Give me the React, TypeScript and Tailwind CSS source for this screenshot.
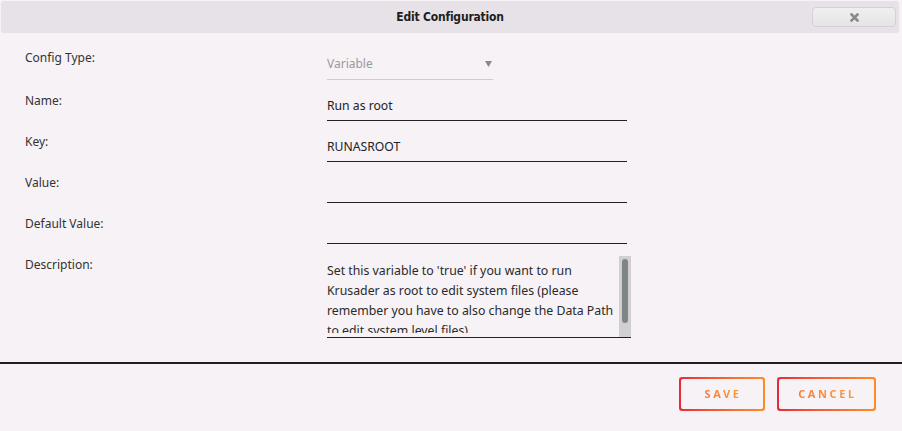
import React from "react";

const font = { fontFamily: '"Noto Sans", "Open Sans", sans-serif' };

function Row({ label, top, children }: { label: string; top?: string; children: React.ReactNode }) {
  return (
    <div className={`flex ${top ?? ""}`}>
      <div className="w-[327px] shrink-0 pl-[25px] text-[12px] leading-[20px] text-[#333]">{label}</div>
      {children}
    </div>
  );
}

function TextField({ value }: { value: string }) {
  return (
    <div className="mt-[2px] h-[28px] w-[300px] border-b border-[#222] flex items-center text-[12.2px] text-[#222]">
      {value}
    </div>
  );
}

function GradButton({ label, w }: { label: string; w: string }) {
  return (
    <div className={`${w} h-[34px] rounded-[3px] p-[2px] bg-gradient-to-r from-[#e8283a] to-[#ff8c26]`}>
      <div className="w-full h-full rounded-[2px] bg-[#f6f2f6] flex items-center justify-center">
        <span className="text-[11px] font-bold tracking-[2.6px] pl-[2px] bg-gradient-to-r from-[#f57a3a] to-[#ff9a30] bg-clip-text text-transparent">
          {label}
        </span>
      </div>
    </div>
  );
}

export default function App() {
  return (
    <div className="w-[902px] h-[431px] bg-[#f6f2f6] overflow-hidden" style={font}>
      <div className="pt-[1px] px-[1px]">
        <div className="relative h-[32px] w-[898px] rounded-[3px] bg-[#e7e2e7] flex items-center justify-center">
          <span className="text-[12px] font-bold text-[#1e1e1e] tracking-[-0.2px]" style={{ fontFamily: '"DejaVu Sans Condensed", "Noto Sans", sans-serif' }}>
            Edit Configuration
          </span>
          <div className="absolute left-[811px] top-[6px] w-[84px] h-[20px] rounded-[4px] border border-[#d4d1d4] bg-gradient-to-b from-[#f0efef] to-[#e6e5e5] flex items-center justify-center">
            <svg width="9" height="9" viewBox="0 0 9 9">
              <path d="M1.5 1.5 L7.5 7.5 M7.5 1.5 L1.5 7.5" stroke="#8a8a8a" strokeWidth="2.6" strokeLinecap="square" />
            </svg>
          </div>
        </div>
      </div>

      <div className="pt-[15px]">
        <Row label="Config Type:">
          <div className="mt-[1px] h-[31px] w-[166px] border-b border-[#cfcbcf] flex items-center justify-between text-[12px] text-[#9a9a9a]">
            <span>Variable</span>
            <svg width="7" height="6" viewBox="0 0 7 6" className="mr-[1px]">
              <path d="M0 0 H7 L3.5 6 Z" fill="#8a8a8a" />
            </svg>
          </div>
        </Row>
        <Row label="Name:" top="mt-[11px]">
          <TextField value="Run as root" />
        </Row>
        <Row label="Key:" top="mt-[11px]">
          <TextField value="RUNASROOT" />
        </Row>
        <Row label="Value:" top="mt-[11px]">
          <TextField value="" />
        </Row>
        <Row label="Default Value:" top="mt-[11px]">
          <TextField value="" />
        </Row>
        <Row label="Description:" top="mt-[11px]">
          <div className="mt-[1px] h-[82px] w-[304px] border-b border-[#222] flex">
            <div className="w-[292px] h-[77px] overflow-hidden pt-[5px] text-[12.3px] leading-[20px] text-[#2a2a2a]">
              Set this variable to 'true' if you want to run Krusader as root to edit system files (please remember you have to also change the Data Path to edit system level files)
            </div>
            <div className="w-[12px] h-full bg-[#d2cfd2] pt-[3px] flex justify-center">
              <div className="w-[6px] h-[64px] rounded-[3px] bg-[#7d8586]" />
            </div>
          </div>
        </Row>
      </div>

      <div className="mt-[24px] h-[1.5px] bg-[#1e1e1e]" />

      <div className="flex justify-end gap-[12px] pr-[26px] pt-[13.5px]">
        <GradButton label="SAVE" w="w-[86px]" />
        <GradButton label="CANCEL" w="w-[99px]" />
      </div>
    </div>
  );
}
